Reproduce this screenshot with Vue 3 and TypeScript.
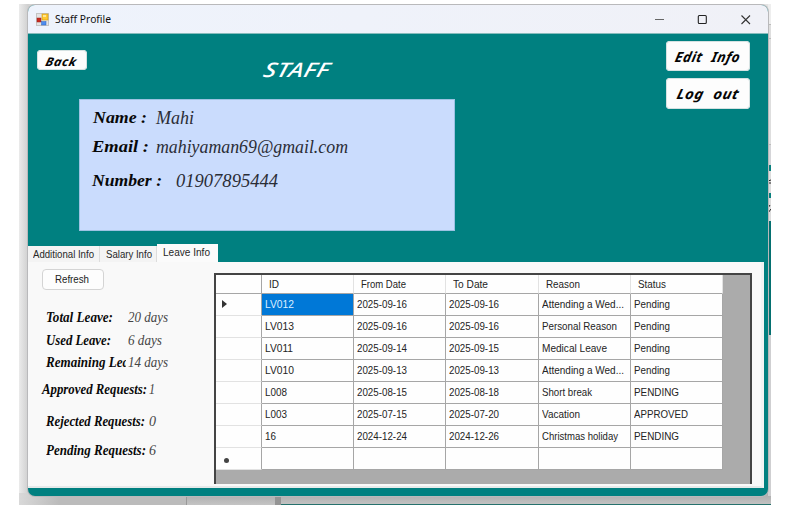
<script setup lang="ts">
import type { Directive } from 'vue'

interface Leave {
  id: string
  from: string
  to: string
  reason: string
  status: string
  w: number[]
}

// Scales a label horizontally so that it takes up the given width in pixels.
const vFit: Directive<HTMLElement, number> = {
  mounted(el, { value }) {
    const natural = el.getBoundingClientRect().width
    if (natural > 0 && value > 0) el.style.transform = `scaleX(${value / natural}) skewX(var(--slant, 0deg))`
  },
}

const details = [
  { key: 'name', label: 'Name :', value: 'Mahi', lw: 54, vw: 38 },
  { key: 'email', label: 'Email :', value: 'mahiyaman69@gmail.com', lw: 57, vw: 192 },
  { key: 'number', label: 'Number :', value: '01907895444', lw: 70, vw: 102 },
]

const tabs = [
  { label: 'Additional Info', key: 'additional', w: 61 },
  { label: 'Salary Info', key: 'salary', w: 46 },
  { label: 'Leave Info', key: 'leave', w: 47 },
]

const stats = [
  { key: 'total', label: 'Total Leave:', value: '20 days', lw: 67, vw: 40 },
  { key: 'used', label: 'Used Leave:', value: '6 days', lw: 65, vw: 34 },
  { key: 'remaining', label: 'Remaining Leave:', value: '14 days', lw: 99, vw: 40 },
  { key: 'approved', label: 'Approved Requests:', value: '1', lw: 105, vw: 6 },
  { key: 'rejected', label: 'Rejected Requests:', value: '0', lw: 99, vw: 7 },
  { key: 'pending', label: 'Pending Requests:', value: '6', lw: 100, vw: 7 },
]

const columns = [
  { title: 'ID', w: 10 },
  { title: 'From Date', w: 45 },
  { title: 'To Date', w: 35 },
  { title: 'Reason', w: 34 },
  { title: 'Status', w: 28 },
]

const leaves: Leave[] = [
  { id: 'LV012', from: '2025-09-16', to: '2025-09-16', reason: 'Attending a Wed...', status: 'Pending', w: [29, 82, 36] },
  { id: 'LV013', from: '2025-09-16', to: '2025-09-16', reason: 'Personal Reason', status: 'Pending', w: [29, 75, 36] },
  { id: 'LV011', from: '2025-09-14', to: '2025-09-15', reason: 'Medical Leave', status: 'Pending', w: [28, 65, 36] },
  { id: 'LV010', from: '2025-09-13', to: '2025-09-13', reason: 'Attending a Wed...', status: 'Pending', w: [29, 82, 36] },
  { id: 'L008', from: '2025-08-15', to: '2025-08-18', reason: 'Short break', status: 'PENDING', w: [22, 50, 45] },
  { id: 'L003', from: '2025-07-15', to: '2025-07-20', reason: 'Vacation', status: 'APPROVED', w: [22, 38, 54] },
  { id: '16', from: '2024-12-24', to: '2024-12-26', reason: 'Christmas holiday', status: 'PENDING', w: [11, 76, 45] },
]
</script>

<template>
  <div class="screen">
    <div class="behind">
      <div class="behind-bottom"><i class="pane"></i><i class="bar"></i><i class="rest"></i></div>
      <div class="behind-right">
        <i class="r1"></i><i class="r2"></i><i class="r3"></i><i class="t1"></i>
        <i class="b1"><svg viewBox="0 0 3 22"><path d="M0 10l3-1M0 12h3" /></svg></i>
        <i class="t2"></i>
        <i class="b2"><svg viewBox="0 0 3 22"><path d="M0 15l3-4M0 10l2-3" /></svg></i>
        <i class="t3"></i>
      </div>
    </div>
    <div class="window">
      <header class="titlebar">
        <svg class="app-icon" viewBox="0 0 13 13">
          <rect x=".5" y=".5" width="12" height="12" fill="#e4e4e4" stroke="#c4c4c4" />
          <rect x="1" y="5" width="4" height="4" fill="#c92b20" stroke="#9d1f17" stroke-width=".5" />
          <rect x="6" y="1" width="6" height="6" fill="#ffc931" stroke="#cf980e" stroke-width=".6" />
          <rect x="5.6" y="8.6" width="4.4" height="3.4" fill="#4d8df0" stroke="#2c60bc" stroke-width=".5" />
          <path d="M7 2h3v2H7z" fill="#ffe696" />
        </svg>
        <span class="caption"><span v-fit="56" class="t">Staff Profile</span></span>
        <svg class="controls" viewBox="0 0 100 28">
          <path d="M0 14.5h9" stroke="#666" />
          <rect x="43.3" y="10.5" width="8" height="8" rx="1" fill="none" stroke="#222" stroke-width="1.1" />
          <path d="M86.5 10.5l8.5 8.5M95 10.5l-8.5 8.5" stroke="#333" stroke-width="1.1" fill="none" />
        </svg>
      </header>

      <section class="profile">
        <button class="btn back"><span v-fit="31" class="script">Back</span></button>
        <div class="center">
          <h1><span v-fit="66" class="script">STAFF</span></h1>
          <dl class="card">
            <div v-for="d in details" :key="d.key" class="detail" :class="d.key">
              <dt><span v-fit="d.lw" class="t">{{ d.label }}</span></dt>
              <dd><span v-fit="d.vw" class="t">{{ d.value }}</span></dd>
            </div>
          </dl>
        </div>
        <div class="actions">
          <button class="btn"><span v-fit="65" class="script">Edit Info</span></button>
          <button class="btn second"><span v-fit="62" class="script">Log out</span></button>
        </div>
      </section>

      <nav class="tabs">
        <div v-for="t in tabs" :key="t.key" class="tab" :class="t.key">
          <span v-fit="t.w" class="t">{{ t.label }}</span>
        </div>
      </nav>

      <main class="page">
        <aside class="summary">
          <button class="refresh"><span v-fit="34" class="t">Refresh</span></button>
          <div v-for="s in stats" :key="s.key" class="stat" :class="s.key">
            <b><span v-fit="s.lw" class="t">{{ s.label }}</span></b>
            <em><span v-fit="s.vw" class="t">{{ s.value }}</span></em>
          </div>
        </aside>
        <div class="grid">
          <div class="row head">
            <div class="mark"></div>
            <div v-for="c in columns" :key="c.title" class="cell"><span v-fit="c.w" class="t">{{ c.title }}</span></div>
          </div>
          <div v-for="(l, i) in leaves" :key="l.id" class="row">
            <div class="mark"><svg v-if="i === 0" viewBox="0 0 5 8"><path d="M0 0l5 4-5 4z" /></svg></div>
            <div class="cell" :class="{ selected: i === 0 }"><span v-fit="l.w[0]" class="t">{{ l.id }}</span></div>
            <div class="cell"><span v-fit="50" class="t">{{ l.from }}</span></div>
            <div class="cell"><span v-fit="50" class="t">{{ l.to }}</span></div>
            <div class="cell"><span v-fit="l.w[1]" class="t">{{ l.reason }}</span></div>
            <div class="cell"><span v-fit="l.w[2]" class="t">{{ l.status }}</span></div>
          </div>
          <div class="row">
            <div class="mark"><i class="dot"></i></div>
            <div v-for="n in 5" :key="n" class="cell"></div>
          </div>
        </div>
      </main>
    </div>
  </div>
</template>

<style>
body { margin: 0; background: #fff; overflow: hidden; }
</style>

<style scoped>
* { box-sizing: border-box; }
.screen { position: relative; width: 794px; height: 515px; padding: 5px 0 0 28px; background: #fff; font-family: "Liberation Sans", sans-serif; }
.t, .script { display: inline-block; white-space: pre; transform-origin: 0 50%; }
button { font: inherit; padding: 0; border: 0; }

.behind { position: absolute; left: 19px; top: 4px; width: 752px; height: 501px; background: linear-gradient(90deg, #ebebeb, #d0d0d0 9px, #e4e4e4 20px); display: flex; flex-direction: column; justify-content: flex-end; }
.behind-bottom { display: flex; height: 12px; background: linear-gradient(#aaa, #c4c4c4); }
.pane { width: 168px; border-right: 1px solid #999; background: linear-gradient(90deg, #d9d9d9, #bbb 40px); }
.bar { width: 94px; border-right: 6px solid #949494; }
.rest { flex: 1; border-bottom: 1px solid #26716d; }
.behind-right { position: absolute; right: 0; top: 0; width: 3px; height: 492px; display: flex; flex-direction: column; background: #cfcfd1; }
.behind-right i { display: block; flex: none; }
.r1 { height: 21px; border-bottom: 1px solid #bbb; background: #eee; }
.r2 { height: 14px; border-bottom: 1px solid #bbb; background: #dedede; }
.r3 { height: 106px; border-bottom: 1px solid #bbb; background: #dedede; }
.t1 { height: 26px; border-top: 20px solid #d5d5d8; background: #08807e; }
.b1 { height: 22px; background: #ddd; }
.t2 { height: 5px; background: #08807e; }
.b2 { height: 23px; background: #ddd; }
.t3 { height: 114px; background: #057070; }
.behind-right svg { display: block; width: 3px; height: 22px; stroke: #222; fill: none; }

.window { position: relative; width: 740px; height: 491px; border-radius: 7px; background: #008080; overflow: hidden; box-shadow: 0 0 0 1px #b9b9bb; }
.titlebar { height: 28px; display: flex; align-items: center; padding-left: 8px; background: linear-gradient(90deg, #eef3fc, #eff2fa 45%, #f0f1f7); box-shadow: 0 1px 0 #86bcbc; }
.app-icon { width: 13px; height: 13px; }
.caption { width: 560px; margin-left: 6px; font: 11.5px/28px "Noto Sans", sans-serif; color: #111; }
.controls { width: 100px; height: 28px; margin-left: 40px; }

.profile { display: flex; height: 211px; }
.btn { display: flex; justify-content: center; background: #fdfdfd; border-radius: 4px; box-shadow: inset 0 0 0 1px #d5e2e2; color: #050505; }
.script { --slant: -12deg; font-family: "Noto Sans", sans-serif; font-style: italic; font-weight: 700; letter-spacing: .5px; word-spacing: 5px; transform-origin: 50% 50%; }
.back { width: 50px; height: 20px; margin: 17px 0 0 9px; }
.back .script { font-size: 12px; line-height: 24px; }
.center { width: 376px; margin-left: -7px; }
h1 { height: 66px; margin: 0; padding-left: 184px; color: #fff; }
h1 .script { font-size: 20px; line-height: 74px; font-weight: 500; transform-origin: 0 50%; }
.card { margin: 0; width: 376px; height: 132px; padding: 6px 0 0 12px; margin-left: -1px; background: #cadcfd; border: 1px solid #9cc2e2; font: italic 18px/24px "Liberation Serif", serif; }
.detail { display: flex; height: 29px; }
.number { margin-top: 5px; }
dt { width: 64px; font-weight: 700; font-size: 17px; color: #080808; }
dd { margin: 0; color: #2a2d36; }
.name dt { padding-left: 1px; }
.number dt { width: 84px; }
.actions { margin: 8px 0 0 210px; }
.actions .btn { width: 84px; height: 30px; }
.actions .second { height: 31px; margin-top: 7px; }
.actions .script { font-size: 14px; line-height: 31px; }

.tabs { display: flex; align-items: flex-end; height: 18px; font-size: 11.5px; color: #272727; }
.tab { height: 16px; line-height: 17px; padding-left: 5px; background: #f4f4f4; border-right: 1px solid #ddd; white-space: nowrap; }
.additional { width: 72px; }
.salary { width: 57px; padding-left: 6px; }
.leave { width: 61px; height: 18px; background: #fbfbfb; border: 0; padding-left: 6px; }

.page { display: flex; width: 736px; height: 226px; background: #f9f9f9; border-right: 3px solid #f1f4f4; border-bottom: 2px solid #e6eaea; }
.summary { width: 186px; padding: 7px 0 0 14px; font: italic 14px/18px "Liberation Serif", serif; }
.refresh { display: block; width: 62px; height: 21px; padding-left: 12px; text-align: left; border: 1px solid #d4d4d4; border-radius: 4px; background: #fdfdfd; font: 11.5px/19px "Liberation Sans", sans-serif; color: #222; }
.stat { display: flex; height: 18px; }
.stat b { width: 84px; padding-left: 4px; overflow: hidden; white-space: nowrap; color: #0a0a0a; }
.stat em { padding-left: 2px; color: #454545; }
.total { margin-top: 19px; }
.used { margin-top: 5px; }
.remaining { margin-top: 4px; }
.approved { margin-top: 9px; }
.rejected { margin-top: 14px; }
.pending { margin-top: 11px; }
.approved b, .rejected b, .pending b { width: 107px; overflow: visible; }
.approved b { padding-left: 0; }
.approved em, .rejected em, .pending em { padding-left: 0; }

.grid { width: 538px; height: 211px; margin-top: 11px; background: #ababab; border: 2px solid #444; border-bottom: 0; font-size: 11.5px; color: #242424; }
.row { display: flex; width: 507px; height: 22.1px; background: #fefefe; }
.head { height: 18.5px; }
.mark { display: flex; align-items: center; width: 46px; padding-left: 6px; border-right: 1px solid #a6a6a6; border-bottom: 1px solid #e2e2e2; }
.mark svg { width: 5px; height: 8px; fill: #333; }
.dot { width: 5px; height: 5px; margin: 3px 0 0 2px; border-radius: 50%; background: #444; }
.cell { width: 92.2px; padding-left: 3px; line-height: 21px; border-right: 1px solid #a6a6a6; border-bottom: 1px solid #a6a6a6; white-space: nowrap; }
.head .cell { padding-left: 7px; line-height: 19px; border-right-color: #e2e2e2; }
.head .mark { border-bottom-color: #a6a6a6; }
.selected { background: #0078d7; color: #dceeff; }
</style>
